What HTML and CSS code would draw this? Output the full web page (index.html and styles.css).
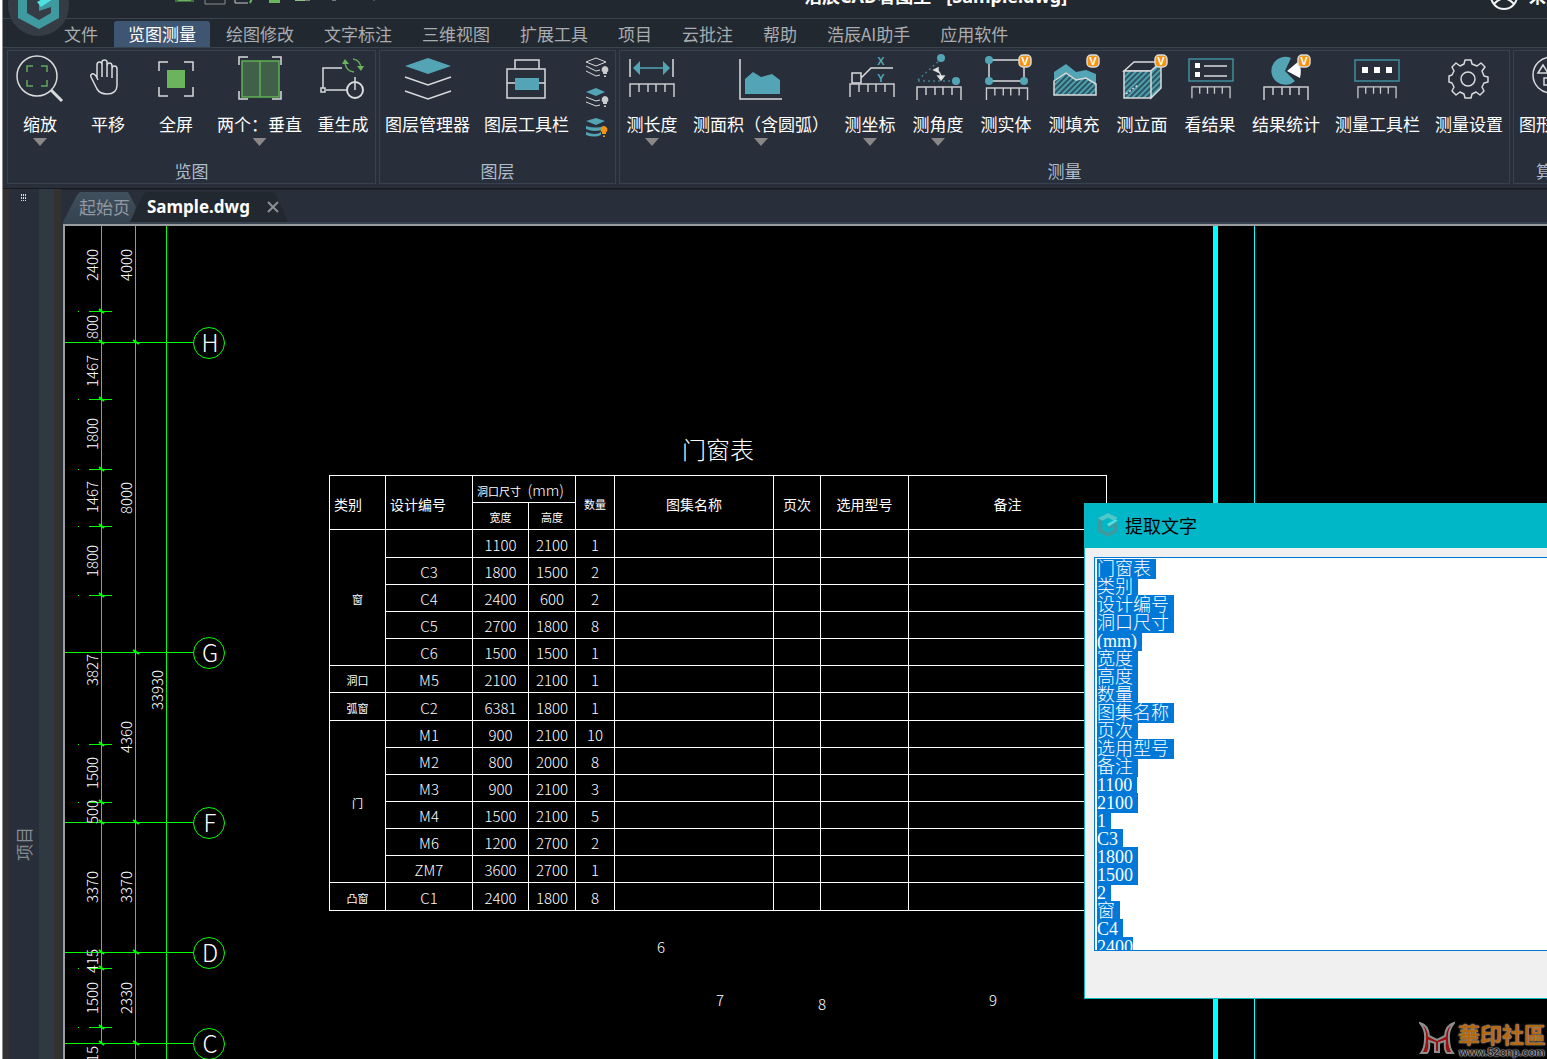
FILE: index.html
```html
<!DOCTYPE html>
<html lang="zh-CN">
<head>
    <meta charset="UTF-8">
    <meta name="viewport" content="width=device-width, initial-scale=1.0">
    <title>浩辰CAD看图王</title>
    <link rel="stylesheet" href="styles.css">
</head>
<body>
<svg class="defs" width="0" height="0" aria-hidden="true">
    <defs>
        <pattern id="hatch" width="4" height="4" patternUnits="userSpaceOnUse" patternTransform="rotate(45)">
            <rect width="4" height="4" fill="#2b5560"/>
            <rect width="2" height="4" fill="#4f9fae"/>
        </pattern>
        <symbol id="ruler" viewBox="0 0 46 15" overflow="visible">
            <path d="M1 14V1H45V14M10 1V9M19 1V9M27 1V9M36 1V9" fill="none" stroke="#c9cbcd" stroke-width="1.5"/>
        </symbol>
        <symbol id="vip" viewBox="0 0 12 12" overflow="visible">
            <rect width="12" height="12" rx="4" fill="#f7930f"/>
            <text x="6" y="10" text-anchor="middle" class="vip-text">V</text>
        </symbol>
        <symbol id="bulb" viewBox="0 0 8 12" overflow="visible">
            <path d="M4 0a3.500 3.500 0 0 1 2 6.300V8H2V6.300A3.500 3.500 0 0 1 4 0zM3 9.500h2v1.500H3z"/>
        </symbol>
        <symbol id="cube" viewBox="0 0 48 54">
            <path d="M24 2L44 12L36 18L24 12L12 18V36L24 43L36 36V30L24 34V26L44 18V41L24 52L3 41V13Z" fill="#3f9aa0"/>
            <path d="M24 2L44 12L36 18L24 12L12 18L3 13Z" fill="#4cc9cb"/>
            <path d="M22 25L40 15L44 18L26 30Z" fill="#4fe0e0"/>
        </symbol>
    </defs>
</svg>
<div class="app">
    <header class="titlebar">
        <svg class="quick-icons" width="250" height="20" viewBox="0 0 250 20" fill="none" aria-hidden="true">
            <path d="M4 15V5H17V15Z" fill="#6ab45e"/><path d="M1 15H20" stroke="#6ab45e"/>
            <path d="M31 2V18H51V2M41 8V14" stroke="#8b8f94"/>
            <path d="M61 2V17H74" stroke="#c9cbcd"/><path d="M76 17L79 10" stroke="#6ab45e" stroke-width="2"/>
            <path d="M92 5H109V14H106V17H95V14H92Z" fill="#6ab45e"/>
            <path d="M121 5H131V15H121Z" fill="#8cc47f"/><path d="M131 14H136V5" stroke="#c9cbcd"/>
            <path d="M158 5V14H162V5" stroke="#c9cbcd"/>
            <path d="M200 4V15" stroke="#777c82"/>
        </svg>
        <h1 class="title">浩辰CAD看图王 - [Sample.dwg]</h1>
        <button class="account">
            <svg width="30" height="30" viewBox="0 0 30 30" fill="none" stroke="#f0f2f4" stroke-width="2" aria-hidden="true">
                <circle cx="15" cy="15" r="13"/><circle cx="15" cy="11" r="5"/><path d="M5 23Q15 12 25 23"/>
            </svg>
            <span>未登录</span>
        </button>
    </header>
    <button class="app-logo" aria-label="应用菜单"><svg width="48" height="54"><use href="#cube"/></svg></button>

    <nav class="menu">
        <a href="#">文件</a>
        <a href="#" class="active">览图测量</a>
        <a href="#">绘图修改</a>
        <a href="#">文字标注</a>
        <a href="#">三维视图</a>
        <a href="#">扩展工具</a>
        <a href="#">项目</a>
        <a href="#">云批注</a>
        <a href="#">帮助</a>
        <a href="#">浩辰AI助手</a>
        <a href="#">应用软件</a>
    </nav>

    <div class="ribbon">
        <section class="group">
            <div class="tools">
                <button class="tool drop">
                    <svg viewBox="0 0 48 48"><circle cx="21" cy="22" r="20"/><path d="M35 36L46 47" stroke-width="3"/><path class="green" d="M11 18V12H17M25 12H31V18M31 26V32H25M17 32H11V26"/></svg>
                    <span>缩放</span>
                </button>
                <button class="tool">
                    <svg viewBox="0 0 48 48"><path d="M13 25V11q0-3 2.500-3t2.500 3V23M18 20V8q0-2 2.500-2t2.500 2V23M23 12q0-3 2.500-3t2.500 3V24M28 15q0-3 2.500-3t2.500 3V31q0 9-10 9-7 0-10-5L7 23q-1-2 1-3t4 2l2 4"/></svg>
                    <span>平移</span>
                </button>
                <button class="tool">
                    <svg viewBox="0 0 48 48"><path d="M7 17V8H16M32 8H41V17M41 33V42H32M16 42H7V33"/><rect x="15" y="16" width="18" height="18" fill="#6ab45e" stroke="none"/></svg>
                    <span>全屏</span>
                </button>
                <button class="tool drop">
                    <svg viewBox="0 0 48 48"><path d="M3 11V3H12M36 3H45V11M45 37V45H36M12 45H3V37"/><path d="M6 7H43V43H6ZM24 7V43" fill="#40604a" stroke="#5fb054"/></svg>
                    <span>两个：垂直</span>
                </button>
                <button class="tool">
                    <svg viewBox="0 0 48 48"><path d="M23 14H4V34M7 36H28M36 23V36"/><rect x="2" y="34" width="4" height="4"/><circle cx="36" cy="36" r="8" stroke-width="2"/><path class="green" d="M34 5q7 1 8 9M35 18q-8-1-9-9"/><path d="M38 12H45L42 17ZM23 10H30L26 5Z" fill="#6ab45e" stroke="none"/></svg>
                    <span>重生成</span>
                </button>
            </div>
            <h2>览图</h2>
        </section>

        <section class="group">
            <div class="tools">
                <button class="tool">
                    <svg viewBox="0 0 48 48"><path d="M1 12L24 4L47 12L24 20Z" fill="#53a5b5" stroke="none"/><path d="M1 23L24 31L47 23M1 37L24 45L47 37"/></svg>
                    <span>图层管理器</span>
                </button>
                <button class="tool">
                    <svg viewBox="0 0 48 48"><path d="M12 15V6H36V15M4 15H42V44H4ZM4 29H42"/><rect x="12" y="24" width="24" height="12" fill="#53a5b5" stroke="none"/></svg>
                    <span>图层工具栏</span>
                </button>
                <div class="mini-tools">
                    <button aria-label="关闭图层"><svg viewBox="0 0 24 22"><path d="M1 5L11 1L21 5L11 9ZM1 9L11 14L15 13M1 14L11 19L15 18"/><use href="#bulb" x="16" y="9" width="8" height="12" fill="#c9cbcd" stroke="none"/></svg></button>
                    <button aria-label="隔离图层"><svg viewBox="0 0 24 22"><path d="M1 5L11 1L20 5L11 9Z" fill="#53a5b5" stroke="none"/><path d="M1 10L11 14L15 13M1 15L11 19L15 18"/><use href="#bulb" x="16" y="9" width="8" height="12" fill="#c9cbcd" stroke="none"/></svg></button>
                    <button aria-label="打开图层"><svg viewBox="0 0 24 22"><path d="M1 4L11 1L20 4L11 8ZM1 9q10 3 18 0V12q-9 4-18 0ZM1 15q10 4 15 0V18q-6 3-15 0Z" fill="#53a5b5" stroke="none"/><use href="#bulb" x="15" y="9" width="8" height="12" fill="#f7930f" stroke="none"/></svg></button>
                </div>
            </div>
            <h2>图层</h2>
        </section>

        <section class="group">
            <div class="tools">
                <button class="tool drop">
                    <svg viewBox="0 0 48 48"><path d="M2 5V23M45 5V23"/><path d="M9 14H38" stroke="#53a5b5"/><path d="M5 14L12 7V21ZM42 14L35 7V21Z" fill="#53a5b5" stroke="none"/><use href="#ruler" x="1" y="29" width="46" height="15"/></svg>
                    <span>测长度</span>
                </button>
                <button class="tool drop">
                    <svg viewBox="0 0 48 48"><path d="M3 5V45H45"/><path d="M8 40V25L16 18L24 23L35 20L43 26V40Z" fill="#53a5b5" stroke="none"/></svg>
                    <span>测面积（含圆弧）</span>
                </button>
                <button class="tool drop">
                    <svg viewBox="0 0 48 48"><path d="M6 19H15V29H6ZM15 24L25 14H47"/><text x="35" y="11" class="axis">X</text><text x="35" y="28" class="axis">Y</text><use href="#ruler" x="3" y="29" width="46" height="15"/></svg>
                    <span>测坐标</span>
                </button>
                <button class="tool drop">
                    <svg viewBox="0 0 48 48"><path d="M4 26L27 5M4 27H40" stroke="#3f7f8b" stroke-dasharray="2 3"/><circle cx="27" cy="4" r="4" class="node"/><circle cx="42" cy="27" r="4" class="node"/><path d="M23 16q4 3 4 8"/><path d="M20 16L24 14V18ZM24 22H30L27 26Z" fill="#fff"/><use href="#ruler" x="2" y="32" width="46" height="15"/></svg>
                    <span>测角度</span>
                </button>
                <button class="tool">
                    <svg viewBox="0 0 48 48"><path d="M7 6H42V27H7Z"/><circle cx="7" cy="6" r="4" class="node"/><circle cx="7" cy="27" r="4" class="node"/><circle cx="42" cy="27" r="4" class="node"/><use href="#ruler" x="3" y="33" width="44" height="14"/><use href="#vip" x="37" y="1" width="12" height="12"/></svg>
                    <span>测实体</span>
                </button>
                <button class="tool">
                    <svg viewBox="0 0 48 48"><path d="M4 27V18L16 10L26 18L36 16L46 20V30L36 24L26 26L16 18Z" fill="#53a5b5" stroke="none"/><path d="M4 27L16 19L26 26L36 24L46 30V41H4Z" fill="url(#hatch)"/><use href="#vip" x="37" y="1" width="12" height="12"/></svg>
                    <span>测填充</span>
                </button>
                <button class="tool">
                    <svg viewBox="0 0 48 48"><path d="M6 17L16 8H43L33 17Z"/><path d="M6 17H33V44H6ZM33 17L43 8V34L33 44Z" fill="url(#hatch)"/><path d="M8 40L20 31" stroke-dasharray="2 2"/><use href="#vip" x="37" y="1" width="12" height="12"/></svg>
                    <span>测立面</span>
                </button>
                <button class="tool">
                    <svg viewBox="0 0 48 48"><rect x="3" y="5" width="44" height="22" stroke="#3f8f9c"/><path d="M9 9H14V14H9ZM9 18H14V23H9Z" fill="#fff" stroke="none"/><path d="M18 12H41M18 22H41"/><use href="#ruler" x="2" y="32" width="46" height="13"/></svg>
                    <span>看结果</span>
                </button>
                <button class="tool wide">
                    <svg viewBox="0 0 48 48"><path d="M23 17L29 4A14 14 0 1 0 33 27Z" fill="#53a5b5" stroke="none"/><path d="M25 17L37 7Q40 16 38 24Z" fill="#fff" stroke="none"/><use href="#ruler" x="1" y="32" width="46" height="15"/><use href="#vip" x="36" y="1" width="12" height="12"/></svg>
                    <span>结果统计</span>
                </button>
                <button class="tool">
                    <svg viewBox="0 0 48 48"><rect x="1" y="6" width="44" height="21" stroke="#3f8f9c"/><path d="M8 13H14V19H8ZM20 13H26V19H20ZM32 13H38V19H32Z" fill="#fff" stroke="none"/><use href="#ruler" x="0" y="32" width="46" height="13"/></svg>
                    <span>测量工具栏</span>
                </button>
                <button class="tool wide">
                    <svg viewBox="0 0 48 48"><circle cx="23" cy="25" r="7"/><path d="M20 6H26L27 10L32 12L36 9L40 13L37 17L39 22L43 23V28L39 29L37 33L39 37L35 41L31 38L27 40L26 44H20L19 40L15 38L11 41L7 37L9 33L7 29L4 28V22L7 21L9 17L7 13L11 9L15 12L19 10Z" stroke-linejoin="round"/></svg>
                    <span>测量设置</span>
                </button>
            </div>
            <h2>测量</h2>
        </section>

        <section class="group">
            <div class="tools">
                <button class="tool">
                    <svg viewBox="0 0 48 48"><circle cx="22" cy="21" r="18"/><path d="M9 19L14 11L19 19ZM15 24H25V31H15Z"/><circle cx="28" cy="16" r="5"/></svg>
                    <span>图形算量</span>
                </button>
            </div>
            <h2>算量</h2>
        </section>
    </div>

    <div class="main">
        <aside class="sidebar">
            <span class="grip"></span>
            <button class="side-tab">项目</button>
        </aside>
        <div class="workspace">
            <div class="doc-tabs">
                <button class="doc-tab">起始页</button>
                <button class="doc-tab current">Sample.dwg
                    <svg width="12" height="12" viewBox="0 0 12 12" aria-hidden="true"><path d="M1 1L11 11M11 1L1 11" stroke="#8c9095" stroke-width="2"/></svg>
                </button>
            </div>
            <main class="canvas">
                <svg class="drawing" width="100%" height="100%">
                    <g stroke="#0f0" fill="none" shape-rendering="crispEdges">
                        <path d="M36.500 0V818M70.500 0V2000M101.500 0V2000"/>
                        <path d="M0 116.500H128M0 426.500H128M0 596.500H128M0 726.500H128M0 817.500H128"/>
                        <path d="M24 85.500H47M24 173.500H47M24 243.500H47M24 300.500H47M24 369.500H47M24 518.500H47M24 576.500H47M24 742.500H47M24 801.500H47"/>
                        <path d="M13 85.500h1M13 173.500h1M13 243.500h1M13 300.500h1M13 369.500h1M13 518.500h1M13 576.500h1M13 742.500h1M13 801.500h1"/>
                    </g>
                    <g stroke="#0f0" stroke-width="2">
                        <path d="M34 83l5 4M34 171l5 4M34 241l5 4M34 298l5 4M34 367l5 4M34 516l5 4M34 574l5 4M34 740l5 4M34 799l5 4"/>
                        <path d="M34 114l5 4M34 594l5 4M34 724l5 4M34 815l5 4"/>
                        <path d="M68 114l6 4M68 424l6 4M68 594l6 4M68 724l6 4M68 815l6 4"/>
                    </g>
                    <g stroke="#0f0" fill="none">
                        <circle cx="144" cy="117" r="15.500"/>
                        <circle cx="144" cy="427" r="15.500"/>
                        <circle cx="144" cy="597" r="15.500"/>
                        <circle cx="144" cy="727" r="15.500"/>
                        <circle cx="144" cy="818" r="15.500"/>
                    </g>
                    <g class="axis-name">
                        <text x="145" y="126">H</text>
                        <text x="145" y="436">G</text>
                        <text x="145" y="606">F</text>
                        <text x="145" y="736">D</text>
                        <text x="145" y="827">C</text>
                    </g>
                    <g class="dim">
                        <text transform="translate(33 39) rotate(-90)">2400</text>
                        <text transform="translate(33 101) rotate(-90)">800</text>
                        <text transform="translate(33 145) rotate(-90)">1467</text>
                        <text transform="translate(33 208) rotate(-90)">1800</text>
                        <text transform="translate(33 271) rotate(-90)">1467</text>
                        <text transform="translate(33 335) rotate(-90)">1800</text>
                        <text transform="translate(33 444) rotate(-90)">3827</text>
                        <text transform="translate(33 547) rotate(-90)">1500</text>
                        <text transform="translate(33 586) rotate(-90)">500</text>
                        <text transform="translate(33 661) rotate(-90)">3370</text>
                        <text transform="translate(33 735) rotate(-90)">415</text>
                        <text transform="translate(33 772) rotate(-90)">1500</text>
                        <text transform="translate(33 828) rotate(-90)">15</text>
                        <text transform="translate(67 39) rotate(-90)">4000</text>
                        <text transform="translate(67 272) rotate(-90)">8000</text>
                        <text transform="translate(67 511) rotate(-90)">4360</text>
                        <text transform="translate(67 661) rotate(-90)">3370</text>
                        <text transform="translate(67 772) rotate(-90)">2330</text>
                        <text transform="translate(98 464) rotate(-90)">33930</text>
                        <text x="596" y="727">6</text>
                        <text x="655" y="780">7</text>
                        <text x="757" y="784">8</text>
                        <text x="928" y="780">9</text>
                    </g>
                    <g stroke="#0ff" shape-rendering="crispEdges">
                        <path d="M1150.500 0V2000" stroke-width="5"/>
                        <path d="M1189.500 0V2000"/>
                    </g>
                </svg>

                <table class="schedule">
                    <caption>门窗表</caption>
                    <colgroup>
                        <col class="c-kind"><col class="c-code"><col class="c-width"><col class="c-height"><col class="c-count">
                        <col class="c-atlas"><col class="c-page"><col class="c-model"><col class="c-note">
                    </colgroup>
                    <thead>
                        <tr>
                            <th rowspan="2" class="left">类别</th>
                            <th rowspan="2" class="left">设计编号</th>
                            <th colspan="2" class="small left">洞口尺寸 <span class="unit">(mm)</span></th>
                            <th rowspan="2" class="small">数量</th>
                            <th rowspan="2">图集名称</th>
                            <th rowspan="2">页次</th>
                            <th rowspan="2">选用型号</th>
                            <th rowspan="2">备注</th>
                        </tr>
                        <tr><th class="small">宽度</th><th class="small">高度</th></tr>
                    </thead>
                    <tbody>
                        <tr class="tall"><th rowspan="5" class="small">窗</th><td></td><td>1100</td><td>2100</td><td>1</td><td></td><td></td><td></td><td></td></tr>
                        <tr><td>C3</td><td>1800</td><td>1500</td><td>2</td><td></td><td></td><td></td><td></td></tr>
                        <tr><td>C4</td><td>2400</td><td>600</td><td>2</td><td></td><td></td><td></td><td></td></tr>
                        <tr><td>C5</td><td>2700</td><td>1800</td><td>8</td><td></td><td></td><td></td><td></td></tr>
                        <tr><td>C6</td><td>1500</td><td>1500</td><td>1</td><td></td><td></td><td></td><td></td></tr>
                        <tr><th class="small">洞口</th><td>M5</td><td>2100</td><td>2100</td><td>1</td><td></td><td></td><td></td><td></td></tr>
                        <tr class="tall"><th class="small">弧窗</th><td>C2</td><td>6381</td><td>1800</td><td>1</td><td></td><td></td><td></td><td></td></tr>
                        <tr><th rowspan="6" class="small">门</th><td>M1</td><td>900</td><td>2100</td><td>10</td><td></td><td></td><td></td><td></td></tr>
                        <tr><td>M2</td><td>800</td><td>2000</td><td>8</td><td></td><td></td><td></td><td></td></tr>
                        <tr><td>M3</td><td>900</td><td>2100</td><td>3</td><td></td><td></td><td></td><td></td></tr>
                        <tr><td>M4</td><td>1500</td><td>2100</td><td>5</td><td></td><td></td><td></td><td></td></tr>
                        <tr><td>M6</td><td>1200</td><td>2700</td><td>2</td><td></td><td></td><td></td><td></td></tr>
                        <tr><td>ZM7</td><td>3600</td><td>2700</td><td>1</td><td></td><td></td><td></td><td></td></tr>
                        <tr class="tall"><th class="small">凸窗</th><td>C1</td><td>2400</td><td>1800</td><td>8</td><td></td><td></td><td></td><td></td></tr>
                    </tbody>
                </table>

                <section class="dialog">
                    <h2 class="dialog-title"><svg width="24" height="26" viewBox="0 0 48 54"><use href="#cube"/></svg><label for="extracted">提取文字</label></h2>
                    <textarea id="extracted" spellcheck="false">门窗表
类别
设计编号
洞口尺寸
(mm)
宽度
高度
数量
图集名称
页次
选用型号
备注
1100
2100
1
C3
1800
1500
2
窗
C4
2400</textarea>
                </section>

                <a class="watermark" href="#">
                    <svg width="36" height="36" viewBox="0 0 36 36" aria-hidden="true">
                        <path d="M1 2Q9 4 10 15L18 19L26 15Q27 4 35 2Q29 9 30 18Q30 27 34 32H28Q25 29 26 20L20 22V31H16V22L10 20Q11 29 8 32H2Q6 27 6 18Q7 9 1 2Z" fill="#9b0f0f" stroke="#8d8d8d" stroke-width="2"/>
                    </svg>
                    <span class="wm-text">
                        <span class="wm-name">華印社區</span>
                        <span class="wm-url">www.52cnp.com</span>
                    </span>
                </a>
            </main>
        </div>
    </div>
</div>
<script>
    const box = document.getElementById('extracted');
    box.focus();
    box.select();
    box.scrollTop = 0;
</script>
</body>
</html>
```
FILE: styles.css
```css
* {
    box-sizing: border-box;
}
body {
    margin: 0;
    height: 100vh;
    overflow: hidden;
    background: #fff;
    font-family: "Noto Sans CJK SC", sans-serif;
    font-size: 17px;
    line-height: 22px;
}
button {
    margin: 0;
    padding: 0;
    border: none;
    background: none;
    color: inherit;
    font: inherit;
    white-space: nowrap;
    cursor: pointer;
}
h1, h2 {
    margin: 0;
    font-size: 17px;
    font-weight: 400;
}
a {
    color: inherit;
    text-decoration: none;
}
.defs {
    position: absolute;
}
.app {
    position: relative;
    display: flex;
    flex-direction: column;
    height: 100vh;
    margin-left: 2px;
    border-left: 1px solid #8a8a8a;
    background: #22282f;
    overflow: hidden;
}

/* title bar, partly above the window edge */
.titlebar {
    display: flex;
    flex: none;
    align-items: center;
    justify-content: space-between;
    height: 46px;
    margin-top: -27px;
    padding-left: 171px;
    border-bottom: 1px solid #3a444f;
    color: #fff;
}
.titlebar .title {
    flex: 1;
    padding-left: 380px;
    font-family: "Noto Sans", "Noto Sans CJK SC", sans-serif;
    font-size: 18px;
    font-weight: 700;
}
.account {
    display: flex;
    align-items: center;
    gap: 10px;
    width: 58px;
    font-weight: 700;
}
.account svg {
    flex: none;
}
.app-logo {
    position: absolute;
    left: 5px;
    top: -25px;
    width: 61px;
    height: 61px;
    border-radius: 50%;
    background: #353c45;
}

.menu {
    display: flex;
    flex: none;
    height: 29px;
    padding: 2px 0 0 46px;
    border-bottom: 1px solid #38434e;
    color: #a9adb1;
}
.menu a {
    margin: 0 1px;
    padding: 2px 14px;
    white-space: nowrap;
}
.menu .active {
    border-radius: 3px 3px 0 0;
    background: #3f5672;
    color: #fff;
}

.ribbon {
    display: flex;
    flex: none;
    gap: 1px;
    padding: 1px 0 3px 3px;
    border-bottom: 1px solid #171b20;
    background: #282e3a;
    overflow: hidden;
}
.group {
    display: flex;
    flex: none;
    flex-direction: column;
    height: 136px;
    outline: 1px solid #38424e;
    outline-offset: -2px;
}
.group h2 {
    margin-top: auto;
    padding-bottom: 3px;
    color: #aebccb;
    text-align: center;
}
.tools {
    display: flex;
}
.tool {
    display: flex;
    flex-direction: column;
    align-items: center;
    min-width: 68px;
    padding: 5px 7px 0;
    color: #fff;
}
.tool.wide {
    padding: 5px 8px 0;
}
.tool svg {
    width: 48px;
    height: 48px;
    margin-bottom: 11px;
}
.tool svg, .mini-tools svg {
    flex: none;
    fill: none;
    stroke: #d8dadc;
    stroke-width: 1.5;
    overflow: visible;
}
.tool .green {
    stroke: #5fa956;
}
.tool .node {
    fill: #53a5b5;
    stroke: none;
}
.tool.drop::after {
    content: "";
    width: 14px;
    height: 8px;
    margin-top: 3px;
    background: #8a8887;
    clip-path: polygon(0 0, 100% 0, 50% 100%);
}
.axis {
    fill: #53a5b5;
    stroke: none;
    font-family: "Liberation Sans", sans-serif;
    font-size: 11px;
    font-weight: 700;
    text-anchor: middle;
}
.vip-text {
    fill: #fff;
    stroke: none;
    font-family: "Liberation Sans", sans-serif;
    font-size: 11px;
    font-weight: 700;
}
.mini-tools {
    display: flex;
    flex-direction: column;
    gap: 8px;
    width: 41px;
    padding: 8px 0 0 9px;
}
.mini-tools button, .mini-tools svg {
    display: block;
    width: 24px;
    height: 22px;
}
.mini-tools svg {
    stroke-width: 1px;
}

.main {
    display: flex;
    flex: 1;
    min-height: 0;
}
.sidebar {
    display: flex;
    flex: none;
    flex-direction: column;
    align-items: center;
    width: 58px;
    padding: 4px 22px 0 6px;
    background: linear-gradient(90deg, #333231 6px, #282e3a 6px, #282e3a 36px, #2f3942 36px, #2f3942 51px, #333231 51px);
    color: #858b92;
}
.grip {
    width: 6px;
    height: 8px;
    background: repeating-linear-gradient(#282e3a 0 1px, transparent 1px 3px), repeating-linear-gradient(90deg, #dde 0 1px, #282e3a 1px 2px);
}
.side-tab {
    margin-top: 626px;
    writing-mode: vertical-rl;
    transform: rotate(180deg);
    text-orientation: sideways;
}
.workspace {
    display: flex;
    flex: 1;
    flex-direction: column;
    min-width: 0;
    padding-left: 2px;
    background: #282e3a;
    border-top: 1px solid #1e232a;
}
.doc-tabs {
    display: flex;
    flex: none;
    height: 34px;
    padding-top: 2px;
    border-bottom: 2px solid #364250;
}
.doc-tab {
    height: 30px;
    padding: 0 6px 0 16px;
    background: linear-gradient(#41505e, #35424f);
    clip-path: polygon(0 100%, 14px 3px, 17px 0, 65px 0, 100% 50%, 94% 100%);
    color: #9299a0;
}
.doc-tab.current {
    display: flex;
    align-items: center;
    gap: 17px;
    margin-left: -6px;
    padding: 0 9px 0 17px;
    background: #22282f;
    clip-path: polygon(0 100%, 13px 3px, 16px 0, 142px 0, 146px 3px, 100% 100%);
    color: #fff;
    font-family: "Noto Sans", sans-serif;
    font-weight: 700;
}

/* drawing area */
.canvas {
    position: relative;
    flex: 1;
    min-height: 0;
    border: solid #9a9da0;
    border-width: 2px 0 0 2px;
    background: #000;
    color: #fff;
    overflow: hidden;
}
.drawing {
    display: block;
}
.dim, .axis-name {
    fill: #fff;
    font-size: 15px;
    font-weight: 300;
    text-anchor: middle;
}
.axis-name {
    font-size: 24px;
}
.schedule {
    position: absolute;
    left: 264px;
    top: 205px;
    width: 778px;
    border-collapse: collapse;
    table-layout: fixed;
    font-size: 15px;
    line-height: 20px;
    text-align: center;
}
.schedule caption {
    height: 44px;
    font-size: 24px;
    font-weight: 300;
    line-height: 36px;
}
.schedule th, .schedule td {
    height: 27px;
    padding: 2px 0 0;
    border: 1px solid #fff;
    font-weight: 300;
    white-space: nowrap;
}
.schedule .tall td {
    height: 28px;
}
.schedule th {
    font-size: 14px;
    font-weight: 400;
}
.schedule .small {
    font-size: 11px;
}
.schedule .left {
    padding-left: 4px;
    text-align: left;
}
.schedule .unit {
    margin-left: 4px;
    font-size: 15px;
    font-weight: 300;
}
.c-kind, .c-width { width: 56px; }
.c-code { width: 87px; }
.c-height, .c-page { width: 47px; }
.c-count { width: 39px; }
.c-atlas { width: 159px; }
.c-model { width: 88px; }
.c-note { width: 198px; }

.dialog {
    position: absolute;
    left: 1019px;
    right: 0;
    top: 277px;
    height: 496px;
    display: flex;
    flex-direction: column;
    border: 1px solid #12b5bd;
    border-right: none;
    background: #f0f0f0;
    color: #000;
}
.dialog-title {
    display: flex;
    align-items: center;
    gap: 5px;
    height: 44px;
    padding: 0 0 2px 11px;
    background: #00b7c7;
    font-size: 18px;
}
.dialog textarea {
    height: 394px;
    margin: 9px 0 0 9px;
    padding: 2px;
    border: 1px solid #0078d7;
    border-right: none;
    border-radius: 0;
    outline: none;
    background: #fff;
    color: #000;
    font-family: "Liberation Serif", "Noto Sans CJK SC", serif;
    font-size: 18px;
    font-weight: 300;
    line-height: 18px;
    resize: none;
    overflow: hidden;
}
.dialog textarea::selection {
    background: #0078d7;
    color: #fff;
}

.watermark {
    position: absolute;
    right: 1px;
    bottom: 0;
    display: flex;
    gap: 3px;
}
.wm-text {
    display: flex;
    flex-direction: column;
}
.wm-name {
    color: #b5690f;
    font-family: "Noto Sans CJK TC", sans-serif;
    font-size: 22px;
    font-weight: 700;
    line-height: 24px;
    text-shadow: 0 0 2px #aaa, 0 0 1px #aaa;
}
.wm-url {
    color: #222;
    font-family: "Liberation Sans", sans-serif;
    font-size: 11px;
    font-weight: 700;
    line-height: 14px;
    text-align: center;
    text-shadow: 0 0 1px #ccc, 0 0 2px #ccc, 0 0 1px #ccc;
}
```
